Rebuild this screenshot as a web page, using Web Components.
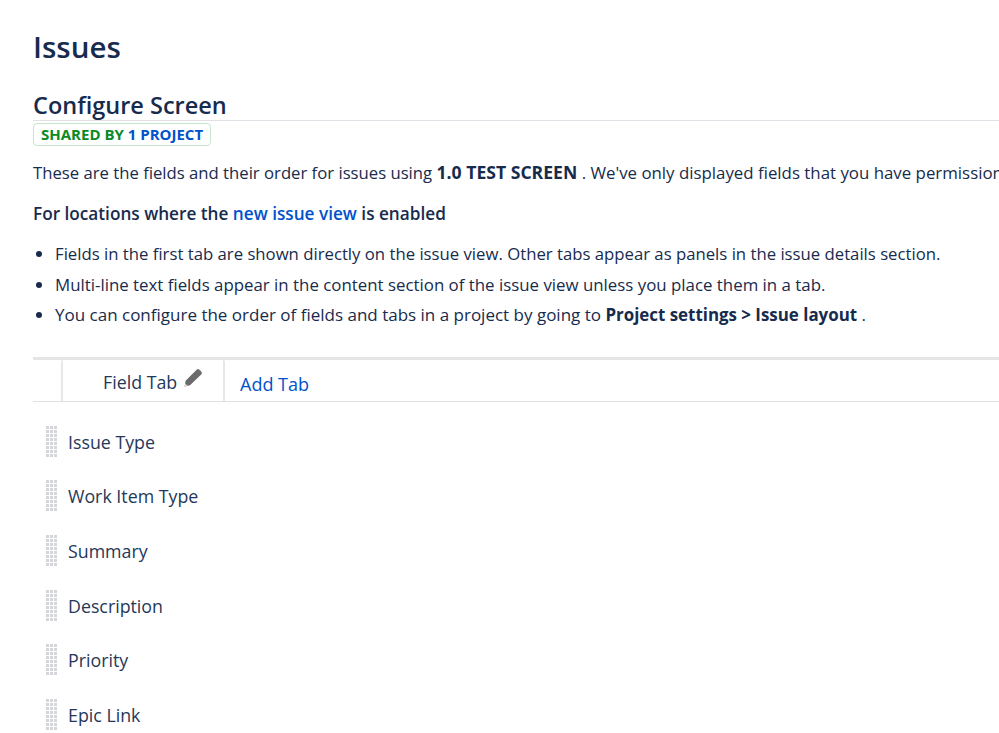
<!DOCTYPE html>
<html>
<head>
<meta charset="utf-8">
<title>Configure Screen</title>
<style>
  html, body { margin: 0; background: #fff; overflow: hidden; }
  body {
    font-family: "Open Sans", "Noto Sans", "Liberation Sans", sans-serif;
    color: #172b4d;
    font-size: 18px;
  }
</style>
</head>
<body>
<issues-page>
  <screen-header slot="header" title="Configure Screen">
    <shared-badge></shared-badge>
  </screen-header>
  <screen-intro></screen-intro>
  <field-tabs></field-tabs>
  <field-row>Issue Type</field-row>
  <field-row>Work Item Type</field-row>
  <field-row>Summary</field-row>
  <field-row>Description</field-row>
  <field-row>Priority</field-row>
  <field-row>Epic Link</field-row>
</issues-page>

<script>
class IssuesPage extends HTMLElement {
  constructor() {
    super();
    this.attachShadow({ mode: "open" });
    this.shadowRoot.innerHTML = `
    <style>
      :host { display: block; padding: 28px 0 0 33px; height: 705px; overflow: hidden; }
      h1 { margin: 0 0 22px; font-size: 29.5px; line-height: 38px; font-weight: 600; color: #172b4d; }
    </style>
    <h1>Issues</h1>
    <slot name="header"></slot>
    <slot></slot>`;
  }
}

class ScreenHeader extends HTMLElement {
  constructor() {
    super();
    this.attachShadow({ mode: "open" });
    this.shadowRoot.innerHTML = `
    <style>
      :host { display: block; }
      h2 { margin: 0; padding-top: 2px; font-size: 23.5px; line-height: 30px; font-weight: 600; border-bottom: 1px solid #dfe1e6; }
    </style>
    <h2>${this.getAttribute("title")}</h2>
    <slot></slot>`;
  }
}

class SharedBadge extends HTMLElement {
  constructor() {
    super();
    this.attachShadow({ mode: "open" });
    this.shadowRoot.innerHTML = `
    <style>
      :host {
        display: inline-block; box-sizing: border-box; height: 23px; margin-top: 2px;
        padding: 0 7px; border: 1px solid #c3e6cd; border-radius: 4px;
        font-size: 15px; line-height: 21px; font-weight: 700; white-space: nowrap; color: #0a8a25;
      }
      span { color: #0052cc; }
    </style>
    SHARED BY <span>1 PROJECT</span>`;
  }
}

class ScreenIntro extends HTMLElement {
  constructor() {
    super();
    this.attachShadow({ mode: "open" });
    this.shadowRoot.innerHTML = `
    <style>
      :host { display: block; font-size: 16.85px; line-height: 28px; }
      p { margin: 0; white-space: nowrap; }
      .lead { margin-top: 12px; }
      .lead span { font-size: 16.7px; }
      .lead b { font-size: 17.6px; }
      .sub { margin-top: 13px; font-size: 17.2px; font-weight: 600; }
      a { color: #0052cc; text-decoration: none; }
      ul { margin: 12px 0 0; padding: 0 0 0 22px; }
      li { height: 30.5px; white-space: nowrap; }
      li:first-child { font-size: 16.73px; }
      li:last-child { font-size: 17px; }
      b { font-weight: 700; font-size: 16.9px; }
    </style>
    <p class="lead"><span>These are the fields and their order for issues using</span> <b>1.0 TEST SCREEN</b> . We've only displayed fields that you have permission to view.</p>
    <p class="sub">For locations where the <a href="#">new issue view</a> is enabled</p>
    <ul>
      <li>Fields in the first tab are shown directly on the issue view. Other tabs appear as panels in the issue details section.</li>
      <li>Multi-line text fields appear in the content section of the issue view unless you place them in a tab.</li>
      <li>You can configure the order of fields and tabs in a project by going to <b>Project settings &gt; Issue layout</b> .</li>
    </ul>`;
  }
}

class FieldTabs extends HTMLElement {
  constructor() {
    super();
    this.attachShadow({ mode: "open" });
    this.shadowRoot.innerHTML = `
    <style>
      :host {
        display: flex; box-sizing: border-box; height: 45px; margin: 25px 0 13px;
        border-top: 3px solid #e4e5e7; border-bottom: 1px solid #dfe1e6;
        padding-left: 28px; font-size: 18px;
      }
      .active {
        box-sizing: border-box; width: 164px; height: 41px; padding: 9px 0 0 40px;
        border-left: 2px solid #e6e7e9; border-right: 2px solid #e6e7e9;
        border-top-left-radius: 2px; border-top-right-radius: 2px;
        display: flex; gap: 7px; font-size: 17.8px; line-height: 27px; white-space: nowrap; color: #253858;
      }
      svg { width: 18px; height: 18px; }
      a { margin: 11px 0 0 15px; color: #0052cc; line-height: 27px; text-decoration: none; }
    </style>
    <div class="active">Field Tab
      <svg viewBox="0 0 18 18"><path fill="#6b6b6b" d="M12.6 .8a2 2 0 0 1 2.8 0l1.8 1.8a2 2 0 0 1 0 2.8L6 16.2 .6 17.4 1.6 11.8z"/><path fill="#d9d3c8" d="M.6 17.4l.6-3 2.4 2.4z"/></svg>
    </div>
    <a href="#">Add Tab</a>`;
  }
}

class FieldRow extends HTMLElement {
  constructor() {
    super();
    this.attachShadow({ mode: "open" });
    this.shadowRoot.innerHTML = `
    <style>
      :host { display: flex; align-items: center; height: 54.6px; gap: 11px; font-size: 17.8px; padding-left: 13px; color: #253858; }
      .grip {
        width: 11px; height: 32px; flex: none; margin-bottom: 2px;
        background-image: linear-gradient(#fff 1px, transparent 1px), linear-gradient(90deg, #d4d6d9 3px, transparent 3px);
        background-size: 4px 4px;
      }
    </style>
    <div class="grip"></div>
    <slot></slot>`;
  }
}

customElements.define("issues-page", IssuesPage);
customElements.define("screen-header", ScreenHeader);
customElements.define("shared-badge", SharedBadge);
customElements.define("screen-intro", ScreenIntro);
customElements.define("field-tabs", FieldTabs);
customElements.define("field-row", FieldRow);
</script>
</body>
</html>
